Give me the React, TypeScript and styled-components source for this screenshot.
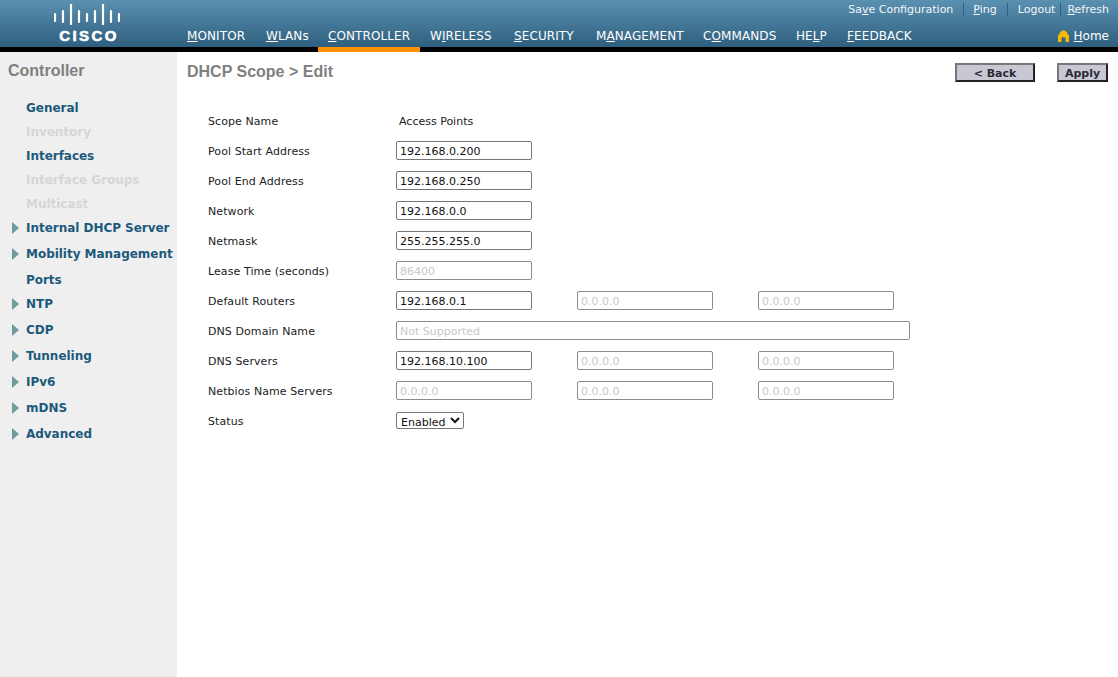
import React from 'react';
import styled, { createGlobalStyle } from 'styled-components';

const GlobalStyle = createGlobalStyle`
  html, body {
    margin: 0;
    padding: 0;
    height: 100%;
    background: #fff;
    font-family: "DejaVu Sans", Verdana, sans-serif;
  }
`;

const Page = styled.div`
  width: 1118px;
  height: 677px;
  display: flex;
  flex-direction: column;
  overflow: hidden;
`;

const Header = styled.header`
  height: 47px;
  display: flex;
  background: linear-gradient(#5a90b0, #2f5f7f);
  border-bottom: 5px solid #000;
`;

const LogoBox = styled.div`
  width: 177px;
  flex: none;
  display: flex;
  flex-direction: column;
  align-items: center;
  padding: 4px 3px 0 0;
  box-sizing: border-box;
`;

const LogoText = styled.div`
  color: #fff;
  font: bold 15px "Liberation Sans", Arial, sans-serif;
  -webkit-text-stroke: 0.6px #fff;
  letter-spacing: 2.4px;
  line-height: 15px;
  margin-top: 3px;
  padding-left: 4px;
`;

const HeaderRight = styled.div`
  flex: 1;
  display: flex;
  flex-direction: column;
  justify-content: space-between;
  min-width: 0;
`;

const TopLinks = styled.div`
  display: flex;
  justify-content: flex-end;
  align-items: center;
  height: 19px;
  padding-right: 9px;
  font-size: 11px;
  color: #fff;
`;

const TopLink = styled.span`
  color: #f2f6f8;
`;

const Sep = styled.span<{ $left: number; $right: number }>`
  width: 1px;
  height: 13px;
  background: #2f6288;
  margin: 0 ${(p) => p.$right}px 0 ${(p) => p.$left}px;
`;

const NavRow = styled.nav`
  display: flex;
  height: 24px;
  align-items: stretch;
`;

const NavItem = styled.div<{ $active?: boolean; $width: number }>`
  width: ${(p) => p.$width}px;
  flex: none;
  box-sizing: border-box;
  padding: 0 0 0 10px;
  font-size: 12px;
  letter-spacing: 0.1px;
  line-height: 26px;
  color: #fff;
  white-space: nowrap;
  position: relative;
  ${(p) =>
    p.$active &&
    `&::after {
      content: '';
      position: absolute;
      left: 0;
      right: 0;
      top: 24px;
      height: 5px;
      background: #ff9000;
    }`}
`;

const HomeLink = styled.div`
  margin-left: auto;
  padding: 2px 9px 0 0;
  display: flex;
  align-items: center;
  gap: 5px;
  font-size: 12px;
  color: #fff;
`;

const Body = styled.div`
  flex: 1;
  display: flex;
  min-height: 0;
`;

const Sidebar = styled.aside`
  width: 177px;
  flex: none;
  background: #efefef;
  padding-top: 9px;
  box-sizing: border-box;
`;

const SideTitle = styled.h2`
  margin: 0 0 15px 8px;
  font: bold 16px/20px "Liberation Sans", Arial, sans-serif;
  color: #808080;
`;

const SideList = styled.ul`
  list-style: none;
  margin: 0;
  padding: 0;
`;

const SideItem = styled.li<{ $height: number; $disabled?: boolean }>`
  height: ${(p) => p.$height}px;
  padding-left: 26px;
  font-size: 12px;
  letter-spacing: -0.03px;
  line-height: 24px;
  font-weight: bold;
  color: ${(p) => (p.$disabled ? '#d6d6d6' : '#1c5a7c')};
  white-space: nowrap;
  position: relative;
`;

const Arrow = styled.svg`
  position: absolute;
  left: 12px;
  top: 6px;
`;

const Main = styled.main`
  flex: 1;
  min-width: 0;
  padding: 10px 10px 0 10px;
  box-sizing: border-box;
`;

const TitleBar = styled.div`
  display: flex;
  align-items: flex-start;
  height: 44px;
`;

const PageTitle = styled.h1`
  margin: 0;
  font: bold 16px/20px "Liberation Sans", Arial, sans-serif;
  color: #808080;
`;

const Actions = styled.div`
  margin-left: auto;
  display: flex;
  gap: 22px;
  padding-top: 1px;
`;

const ActionButton = styled.button<{ $width: number }>`
  width: ${(p) => p.$width}px;
  height: 19px;
  padding: 2px 0 0;
  box-sizing: border-box;
  background: #c8c8d4;
  border: 2px solid;
  border-color: #777 #222 #222 #777;
  color: #2b2b33;
  font: bold 11px "DejaVu Sans", Verdana, sans-serif;
  line-height: 13px;
`;

const Form = styled.div`
  padding-left: 21px;
`;

const Row = styled.div`
  height: 30px;
  display: flex;
  align-items: center;
`;

const Label = styled.div`
  width: 188px;
  flex: none;
  font-size: 11px;
  letter-spacing: 0.08px;
  color: #222;
`;

const PlainValue = styled.div`
  padding-left: 3px;
  font-size: 11px;
  color: #222;
`;

const Fields = styled.div`
  display: flex;
  gap: 45px;
`;

const Field = styled.input<{ $wide?: boolean }>`
  width: ${(p) => (p.$wide ? 514 : 136)}px;
  height: 19px;
  margin-bottom: 1px;
  box-sizing: border-box;
  padding: 2px 3px 0;
  border: 1px solid #767676;
  border-radius: 2px;
  background: #fff;
  color: #111;
  font: 11px "DejaVu Sans", Verdana, sans-serif;
  outline: none;
  &:disabled {
    border-color: #8c8c8c;
    color: #c8c8c8;
    background: #fff;
  }
`;

const StatusSelect = styled.select`
  width: 68px;
  height: 17px;
  margin-bottom: 1px;
  box-sizing: border-box;
  padding: 2px 0 0;
  border: 1px solid #767676;
  border-radius: 2px;
  background: #fff;
  color: #111;
  font: 11px "DejaVu Sans", Verdana, sans-serif;
`;

const navItems: { pre: string; key: string; post: string; width: number; active?: boolean }[] = [
  { pre: '', key: 'M', post: 'ONITOR', width: 79 },
  { pre: '', key: 'W', post: 'LANs', width: 62 },
  { pre: '', key: 'C', post: 'ONTROLLER', width: 102, active: true },
  { pre: 'W', key: 'I', post: 'RELESS', width: 84 },
  { pre: '', key: 'S', post: 'ECURITY', width: 82 },
  { pre: 'M', key: 'A', post: 'NAGEMENT', width: 107 },
  { pre: 'C', key: 'O', post: 'MMANDS', width: 93 },
  { pre: 'HE', key: 'L', post: 'P', width: 51 },
  { pre: '', key: 'F', post: 'EEDBACK', width: 80 },
];

const sideItems: { label: string; height: number; disabled?: boolean; arrow?: boolean }[] = [
  { label: 'General', height: 24 },
  { label: 'Inventory', height: 24, disabled: true },
  { label: 'Interfaces', height: 24 },
  { label: 'Interface Groups', height: 24, disabled: true },
  { label: 'Multicast', height: 24, disabled: true },
  { label: 'Internal DHCP Server', height: 26, arrow: true },
  { label: 'Mobility Management', height: 26, arrow: true },
  { label: 'Ports', height: 24 },
  { label: 'NTP', height: 26, arrow: true },
  { label: 'CDP', height: 26, arrow: true },
  { label: 'Tunneling', height: 26, arrow: true },
  { label: 'IPv6', height: 26, arrow: true },
  { label: 'mDNS', height: 26, arrow: true },
  { label: 'Advanced', height: 26, arrow: true },
];

const logoBars = [
  [1, 14, 21],
  [9, 11, 22],
  [17, 4, 24],
  [25, 11, 22],
  [33, 14, 21],
  [41, 11, 22],
  [49, 4, 24],
  [57, 11, 22],
  [65, 14, 21],
];

function CiscoLogo() {
  return (
    <>
      <svg width="66" height="21" viewBox="0 4 66 21" aria-hidden="true">
        {logoBars.map(([x, y1, y2]) => (
          <line key={x} x1={x} x2={x} y1={y1} y2={y2} stroke="#fff" strokeWidth="2.2" strokeLinecap="round" />
        ))}
      </svg>
      <LogoText>CISCO</LogoText>
    </>
  );
}

function HomeIcon() {
  return (
    <svg width="11" height="12" viewBox="0 0 11 12" aria-hidden="true">
      <path d="M5.5 0 Q9.5 1.5 10 5 H11 V12 H7.5 V8 Q5.5 6 3.5 8 V12 H0 V5 H1 Q1.5 1.5 5.5 0 Z" fill="#f5b800" />
    </svg>
  );
}

function ArrowIcon() {
  return (
    <Arrow width="7" height="12" viewBox="0 0 7 12" aria-hidden="true">
      <path d="M0 0 L7 6 L0 12 Z" fill="#6f9c9c" />
    </Arrow>
  );
}

function FieldSet({ values }: { values: { value: string; disabled?: boolean }[] }) {
  return (
    <Fields>
      {values.map((v, i) => (
        <Field key={i} readOnly value={v.value} disabled={v.disabled} />
      ))}
    </Fields>
  );
}

const empty = { value: '0.0.0.0', disabled: true };

export default function App() {
  return (
    <Page>
      <GlobalStyle />
      <Header>
        <LogoBox>
          <CiscoLogo />
        </LogoBox>
        <HeaderRight>
          <TopLinks>
            <TopLink>Sa<u>v</u>e Configuration</TopLink>
            <Sep $left={10} $right={9} />
            <TopLink><u>P</u>ing</TopLink>
            <Sep $left={10} $right={10} />
            <TopLink>Logout</TopLink>
            <Sep $left={5} $right={6} />
            <TopLink><u>R</u>efresh</TopLink>
          </TopLinks>
          <NavRow>
            {navItems.map((n) => (
              <NavItem key={n.post} $width={n.width} $active={n.active}>
                {n.pre}<u>{n.key}</u>{n.post}
              </NavItem>
            ))}
            <HomeLink>
              <HomeIcon />
              <span><u>H</u>ome</span>
            </HomeLink>
          </NavRow>
        </HeaderRight>
      </Header>
      <Body>
        <Sidebar>
          <SideTitle>Controller</SideTitle>
          <SideList>
            {sideItems.map((s) => (
              <SideItem key={s.label} $height={s.height} $disabled={s.disabled}>
                {s.arrow && <ArrowIcon />}
                {s.label}
              </SideItem>
            ))}
          </SideList>
        </Sidebar>
        <Main>
          <TitleBar>
            <PageTitle>DHCP Scope &gt; Edit</PageTitle>
            <Actions>
              <ActionButton $width={80}>&lt; Back</ActionButton>
              <ActionButton $width={51}>Apply</ActionButton>
            </Actions>
          </TitleBar>
          <Form>
            <Row>
              <Label>Scope Name</Label>
              <PlainValue>Access Points</PlainValue>
            </Row>
            <Row>
              <Label>Pool Start Address</Label>
              <FieldSet values={[{ value: '192.168.0.200' }]} />
            </Row>
            <Row>
              <Label>Pool End Address</Label>
              <FieldSet values={[{ value: '192.168.0.250' }]} />
            </Row>
            <Row>
              <Label>Network</Label>
              <FieldSet values={[{ value: '192.168.0.0' }]} />
            </Row>
            <Row>
              <Label>Netmask</Label>
              <FieldSet values={[{ value: '255.255.255.0' }]} />
            </Row>
            <Row>
              <Label>Lease Time (seconds)</Label>
              <FieldSet values={[{ value: '86400', disabled: true }]} />
            </Row>
            <Row>
              <Label>Default Routers</Label>
              <FieldSet values={[{ value: '192.168.0.1' }, empty, empty]} />
            </Row>
            <Row>
              <Label>DNS Domain Name</Label>
              <Field $wide readOnly disabled value="Not Supported" />
            </Row>
            <Row>
              <Label>DNS Servers</Label>
              <FieldSet values={[{ value: '192.168.10.100' }, empty, empty]} />
            </Row>
            <Row>
              <Label>Netbios Name Servers</Label>
              <FieldSet values={[empty, empty, empty]} />
            </Row>
            <Row>
              <Label>Status</Label>
              <StatusSelect defaultValue="Enabled">
                <option>Enabled</option>
                <option>Disabled</option>
              </StatusSelect>
            </Row>
          </Form>
        </Main>
      </Body>
    </Page>
  );
}
